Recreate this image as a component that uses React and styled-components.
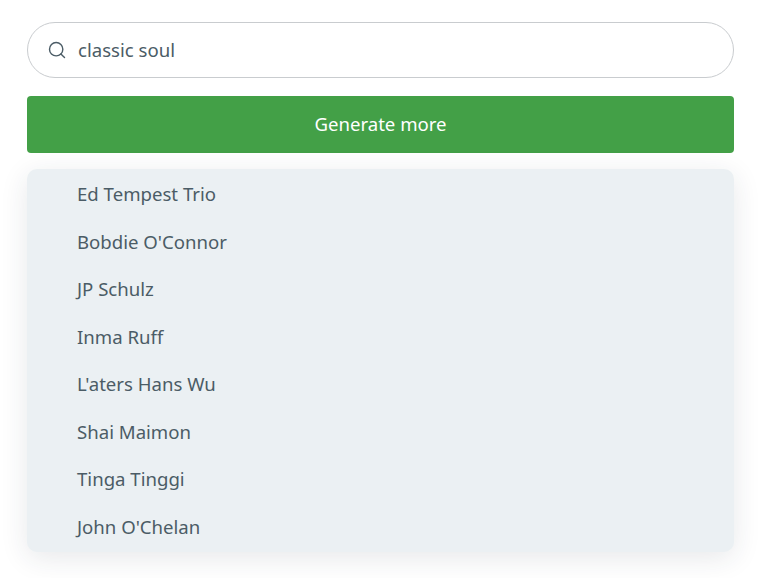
import styled, { createGlobalStyle } from "styled-components";
import { Search } from "lucide-react";

const artists = [
  "Ed Tempest Trio",
  "Bobdie O'Connor",
  "JP Schulz",
  "Inma Ruff",
  "L'aters Hans Wu",
  "Shai Maimon",
  "Tinga Tinggi",
  "John O'Chelan",
];

const GlobalStyle = createGlobalStyle`
  html, body {
    margin: 0;
    background: #ffffff;
    overflow: hidden;
  }
`;

const Page = styled.div`
  display: flex;
  flex-direction: column;
  width: 768px;
  height: 578px;
  box-sizing: border-box;
  padding: 22px 34px 0 27px;
  font-family: "Noto Sans", "Open Sans", sans-serif;
  color: #4b5c66;
`;

const SearchBox = styled.div`
  display: flex;
  align-items: center;
  gap: 11px;
  height: 56px;
  box-sizing: border-box;
  padding: 0 19px 2px;
  border: 1px solid #c9cccf;
  border-radius: 28px;
  background: #fff;
  font-size: 18.6px;
`;

const SearchIcon = styled(Search)`
  width: 20px;
  height: 20px;
  margin-top: 2px;
  color: #4b5c66;
  flex-shrink: 0;
`;

const GenerateButton = styled.button`
  height: 57px;
  margin-top: 18px;
  padding: 0 0 2px;
  border: none;
  border-radius: 4px;
  background: #43a047;
  color: #fff;
  font-family: inherit;
  font-size: 18.6px;
  cursor: pointer;
`;

const ResultList = styled.ul`
  display: grid;
  grid-auto-rows: 47.5px;
  margin: 16px 0 0;
  padding: 2px 0 0 50px;
  height: 383px;
  box-sizing: border-box;
  list-style: none;
  border-radius: 10px;
  background: #ebf0f3;
  box-shadow: 0 6px 28px rgba(40, 50, 60, 0.11);
`;

const ResultItem = styled.li`
  display: flex;
  align-items: center;
  padding-bottom: 2px;
  font-size: 18.6px;
`;

export default function App() {
  return (
    <Page>
      <GlobalStyle />
      <SearchBox>
        <SearchIcon strokeWidth={1.7} />
        <span>classic soul</span>
      </SearchBox>
      <GenerateButton>Generate more</GenerateButton>
      <ResultList>
        {artists.map((name) => (
          <ResultItem key={name}>{name}</ResultItem>
        ))}
      </ResultList>
    </Page>
  );
}
